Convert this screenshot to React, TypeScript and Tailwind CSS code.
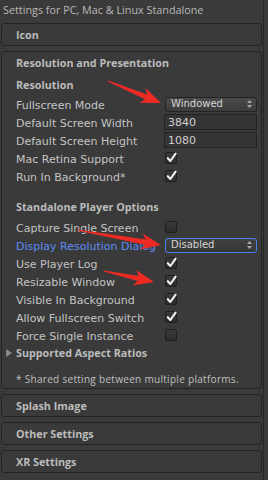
import React from "react";

const font = { fontFamily: '"Open Sans", "Noto Sans", sans-serif' };
const dv = { fontFamily: '"DejaVu Sans", "Noto Sans", sans-serif' };

function Arrow({ x1, y1, x2, y2 }: { x1: number; y1: number; x2: number; y2: number }) {
  const dx = x2 - x1;
  const dy = y2 - y1;
  const len = Math.hypot(dx, dy);
  const ux = dx / len;
  const uy = dy / len;
  const px = -uy;
  const py = ux;
  const headL = 20;
  const headW = 8;
  const shaftW = 2.6;
  const tailW = 0.6;
  const bx = x2 - ux * headL;
  const by = y2 - uy * headL;
  const pts = [
    [x1 + px * tailW, y1 + py * tailW],
    [bx + ux * 4 + px * shaftW, by + uy * 4 + py * shaftW],
    [bx + px * headW, by + py * headW],
    [x2, y2],
    [bx - px * headW, by - py * headW],
    [bx + ux * 4 - px * shaftW, by + uy * 4 - py * shaftW],
    [x1 - px * tailW, y1 - py * tailW],
  ]
    .map((p) => p[0].toFixed(1) + "," + p[1].toFixed(1))
    .join(" ");
  return <polygon points={pts} fill="#ee2a24" />;
}

function Check({ on }: { on: boolean }) {
  return (
    <div className="w-[12px] h-[12px] rounded-[2px] border border-[#1f1f1f] bg-gradient-to-b from-[#3a3a3a] to-[#2c2c2c] relative">
      {on && (
        <svg className="absolute -left-[1px] -top-[2px]" width="13" height="13" viewBox="0 0 13 13">
          <path d="M2.8 7.2 L5.4 10 L10.6 2.6" stroke="#f2f2f2" strokeWidth="2.1" fill="none" strokeLinecap="round" strokeLinejoin="round" />
        </svg>
      )}
    </div>
  );
}

function UpDown() {
  return (
    <svg width="5" height="8" viewBox="0 0 5 8">
      <polygon points="2.5,0 5,3 0,3" fill="#aaaaaa" />
      <polygon points="2.5,8 5,5 0,5" fill="#aaaaaa" />
    </svg>
  );
}

function Popup({ text, focus }: { text: string; focus?: boolean }) {
  return (
    <div
      className={
        "w-[92px] h-[15px] rounded-[3px] flex items-center justify-between pl-[5px] pr-[4px] text-[10px] text-[#d4d4d4] " +
        (focus
          ? "border border-[#4d7ff2] bg-gradient-to-b from-[#424242] to-[#363636]"
          : "border border-[#232323] bg-gradient-to-b from-[#4a4a4a] to-[#3c3c3c]")
      }
      style={dv}
    >
      <span className="leading-none">{text}</span>
      <UpDown />
    </div>
  );
}

function TextField({ text }: { text: string }) {
  return (
    <div
      className="w-[93px] -ml-[1px] h-[16px] border border-[#232323] bg-[#343434] flex items-center pl-[3px] text-[11px] text-[#cfcfcf]"
      style={dv}
    >
      <span className="leading-none">{text}</span>
    </div>
  );
}

function Row({ label, blue, children }: { label: string; blue?: boolean; children?: React.ReactNode }) {
  return (
    <div className="h-[18px] flex items-center">
      <div
        className={
          "w-[149px] text-[11px] leading-none whitespace-nowrap relative top-[1px] " +
          (blue ? "text-[#5b8cf7]" : "text-[#c4c4c4]")
        }
        style={dv}
      >
        {label}
      </div>
      <div className="flex items-center">{children}</div>
    </div>
  );
}

function Collapsed({ title }: { title: string }) {
  return (
    <div className="ml-[1px] w-[261px] h-[23px] rounded-[3px] border border-[#242424] flex items-center pl-[14px]">
      <span className="text-[10.75px] font-bold text-[#bcbcbc] leading-none relative top-[1px]">{title}</span>
    </div>
  );
}

export default function App() {
  return (
    <div className="w-[268px] h-[480px] bg-[#3a3a3a] flex relative overflow-hidden" style={font}>
      <div className="w-[264px] h-full border-r border-[#262626] flex flex-col">
        <div className="h-[23px] flex items-center pl-[3px] pb-[3px]">
          <span className="text-[10.8px] text-[#b8b8b8] leading-none">
            Settings for PC, Mac &amp; Linux Standalone
          </span>
        </div>
        <Collapsed title="Icon" />
        <div className="mt-[5px] ml-[1px] w-[261px] rounded-[3px] border border-[#242424] flex flex-col pl-[14px]">
          <div className="h-[21px] flex items-center">
            <span className="text-[10.75px] font-bold text-[#bcbcbc] leading-none relative top-[1px]">
              Resolution and Presentation
            </span>
          </div>
          <div className="h-[22px] flex items-center">
            <span className="text-[10.75px] font-bold text-[#bcbcbc] leading-none relative top-[1px]">Resolution</span>
          </div>
          <Row label="Fullscreen Mode">
            <Popup text="Windowed" />
          </Row>
          <Row label="Default Screen Width">
            <TextField text="3840" />
          </Row>
          <Row label="Default Screen Height">
            <TextField text="1080" />
          </Row>
          <Row label="Mac Retina Support">
            <Check on />
          </Row>
          <Row label="Run In Background*">
            <Check on />
          </Row>
          <div className="h-[11px]" />
          <div className="h-[22px] flex items-center">
            <span className="text-[10.75px] font-bold text-[#bcbcbc] leading-none">Standalone Player Options</span>
          </div>
          <Row label="Capture Single Screen">
            <Check on={false} />
          </Row>
          <Row label="Display Resolution Dialog" blue>
            <Popup text="Disabled" focus />
          </Row>
          <Row label="Use Player Log">
            <Check on />
          </Row>
          <Row label="Resizable Window">
            <Check on />
          </Row>
          <Row label="Visible In Background">
            <Check on />
          </Row>
          <Row label="Allow Fullscreen Switch">
            <Check on />
          </Row>
          <Row label="Force Single Instance">
            <Check on={false} />
          </Row>
          <div className="h-[18px] flex items-center relative">
            <svg className="absolute -left-[10px] top-[5px]" width="6" height="8" viewBox="0 0 6 8">
              <polygon points="0,0 6,4 0,8" fill="#8a8a8a" />
            </svg>
            <span className="text-[10.75px] font-bold text-[#bcbcbc] leading-none">Supported Aspect Ratios</span>
          </div>
          <div className="h-[8px]" />
          <div className="h-[18px] flex items-center">
            <span className="text-[10px] text-[#c0c0c0] leading-none tracking-[0.3px]">
              * Shared setting between multiple platforms.
            </span>
          </div>
        </div>
        <div className="h-[5px]" />
        <Collapsed title="Splash Image" />
        <div className="h-[5px]" />
        <Collapsed title="Other Settings" />
        <div className="h-[5px]" />
        <Collapsed title="XR Settings" />
      </div>
      <svg className="absolute left-0 top-0 pointer-events-none" width="268" height="480">
        <Arrow x1={108} y1={81} x2={161} y2={103} />
        <Arrow x1={77} y1={230} x2={161} y2={245} />
        <Arrow x1={104} y1={271} x2={154} y2={282} />
      </svg>
    </div>
  );
}
